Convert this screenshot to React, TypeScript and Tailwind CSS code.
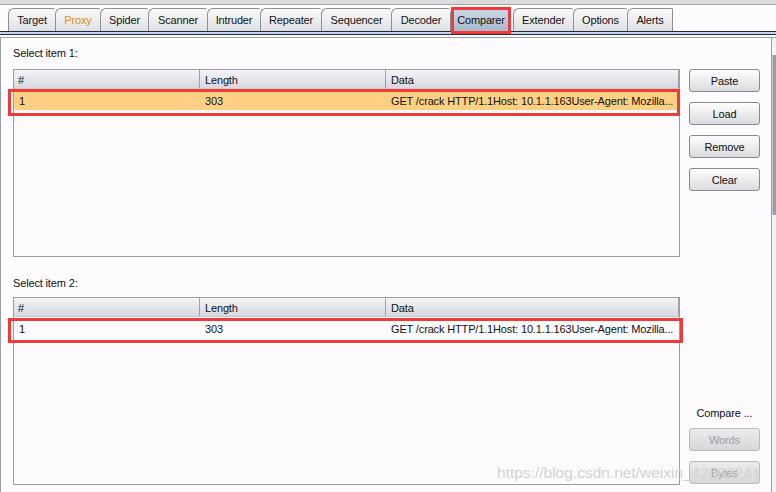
import React from "react";

type Tab = { label: string; w: string; orange?: boolean; selected?: boolean; extraLeft?: boolean; last?: boolean };

const tabs: Tab[] = [
  { label: "Target", w: "w-[47px]" },
  { label: "Proxy", w: "w-[45px]", orange: true },
  { label: "Spider", w: "w-[48px]" },
  { label: "Scanner", w: "w-[59px]" },
  { label: "Intruder", w: "w-[53px]" },
  { label: "Repeater", w: "w-[61px]" },
  { label: "Sequencer", w: "w-[70px]" },
  { label: "Decoder", w: "w-[59px]" },
  { label: "Comparer", w: "w-[61px]", selected: true },
  { label: "Extender", w: "w-[60px]", extraLeft: true },
  { label: "Options", w: "w-[54px]" },
  { label: "Alerts", w: "w-[46px]", last: true },
];

function Button({ label, disabled }: { label: string; disabled?: boolean }) {
  return (
    <div
      className={
        disabled
          ? "h-[23px] pt-px rounded-[3px] border border-[#b8bac0] bg-linear-to-b from-[#ebebec] to-[#d8d8da] flex items-center justify-center text-[#9c9c9c]"
          : "h-[23px] pt-px rounded-[3px] border border-[#878a92] bg-linear-to-b from-[#fefefe] to-[#dadbde] flex items-center justify-center text-[#111] shadow-[inset_0_1px_0_#ffffff]"
      }
    >
      {label}
    </div>
  );
}

function Table({ selected }: { selected?: boolean }) {
  return (
    <div className="h-[188px] border border-[#9d9da8] flex flex-col bg-[#fdfbfe]">
      <div className="h-[19px] flex bg-linear-to-b from-[#f4f4f7] to-[#d8d9e0] border-b border-[#c8c8d0] leading-[13px] text-[#111]">
        <div className="w-[186px] pl-[4px] pt-[4px] border-r border-[#a0a0aa]">#</div>
        <div className="w-[186px] pl-[5px] pt-[4px] border-r border-[#a0a0aa]">Length</div>
        <div className="flex-1 pl-[5px] pt-[4px] border-r border-[#a0a0aa]">Data</div>
      </div>
      <div className={(selected ? "bg-[#ffd084] " : "") + "h-[21px] flex leading-[15px] text-[#111]"}>
        <div className="w-[186px] pl-[5px] pt-[5px]">1</div>
        <div className="w-[186px] pl-[5px] pt-[5px]">303</div>
        <div className="flex-1 pl-[5px] pt-[5px] whitespace-nowrap overflow-hidden">
          GET /crack HTTP/1.1Host: 10.1.1.163User-Agent: Mozilla...
        </div>
      </div>
    </div>
  );
}

export default function App() {
  return (
    <div className="relative w-[776px] h-[492px] overflow-hidden bg-[#fdfbfe] font-['Liberation_Sans',Arial,sans-serif] text-[11px] tracking-[-0.15px] text-[#111]">
      {/* top strip */}
      <div className="h-[4px] bg-[#dbdbdd]" />
      <div className="h-px bg-[#a6a6ac]" />
      {/* tabs */}
      <div className="h-[26px] flex items-end pl-[8px]">
        {tabs.map((t) => (
          <div
            key={t.label}
            className={
              t.w +
              " h-[23px] flex items-center justify-center border-t border-l border-[#8d8d96] rounded-tl-[6px] rounded-tr-[2px] " +
              (t.selected
                ? "bg-linear-to-b from-[#cdd9e6] to-[#a8b9cc] "
                : "bg-linear-to-b from-[#fafafa] to-[#e0e1e4] ") +
              (t.extraLeft ? "ml-[2px] " : "") +
              (t.last ? "border-r " : "") +
              (t.orange ? "text-[#e58a12]" : "text-[#111]")
            }
          >
            {t.label}
          </div>
        ))}
      </div>
      <div className="h-px bg-[#1d2b3b]" />
      <div className="h-[2px] bg-[#c3d6ec]" />
      <div className="h-px bg-[#1d2b3b]" />
      <div className="h-[2px]" />
      {/* main area */}
      <div className="h-[455px] flex border-t border-[#9d9da8]">
        <div className="w-[772px] h-full border-l border-r border-[#9d9da8] flex">
          <div className="ml-[12px] w-[667px] flex flex-col">
            <div className="mt-[7px] h-[16px] leading-[16px]">Select item 1:</div>
            <div className="mt-[8px]">
              <Table selected />
            </div>
            <div className="mt-[18px] h-[16px] leading-[16px]">Select item 2:</div>
            <div className="mt-[6px]">
              <Table />
            </div>
          </div>
          <div className="ml-[9px] w-[71px] mt-[31px] h-[415px] flex flex-col justify-between">
            <div className="flex flex-col gap-[10px]">
              <Button label="Paste" />
              <Button label="Load" />
              <Button label="Remove" />
              <Button label="Clear" />
            </div>
            <div className="flex flex-col">
              <div className="h-[16px] leading-[16px] text-center">Compare ...</div>
              <div className="mt-[7px]">
                <Button label="Words" disabled />
              </div>
              <div className="mt-[10px]">
                <Button label="Bytes" disabled />
              </div>
            </div>
          </div>
        </div>
        <div className="flex-1 flex flex-col">
          <div className="h-[17px] bg-[#f4f4f6]" />
          <div className="h-[160px] bg-[#9a9aa2] border-l border-[#c4c4ca]" />
          <div className="flex-1 bg-[#f4f4f6]" />
        </div>
      </div>

      {/* annotation red boxes */}
      <div className="absolute left-[451px] top-[7px] w-[60px] h-[27px] border-[3px] border-[#ef3a3a]" />
      <div className="absolute left-[8px] top-[89px] w-[672px] h-[27px] border-[3px] border-[#ef3a3a]" />
      <div className="absolute left-[8px] top-[318px] w-[675px] h-[25px] border-[3px] border-[#ef3a3a]" />

      {/* watermark */}
      <div className="absolute left-[497px] top-[465px] text-[15.5px] leading-[15px] tracking-normal text-[#d3d3d3] whitespace-nowrap font-['Liberation_Sans',Arial,sans-serif]">
        https://blog.csdn.net/weixin_42582241
      </div>
    </div>
  );
}
